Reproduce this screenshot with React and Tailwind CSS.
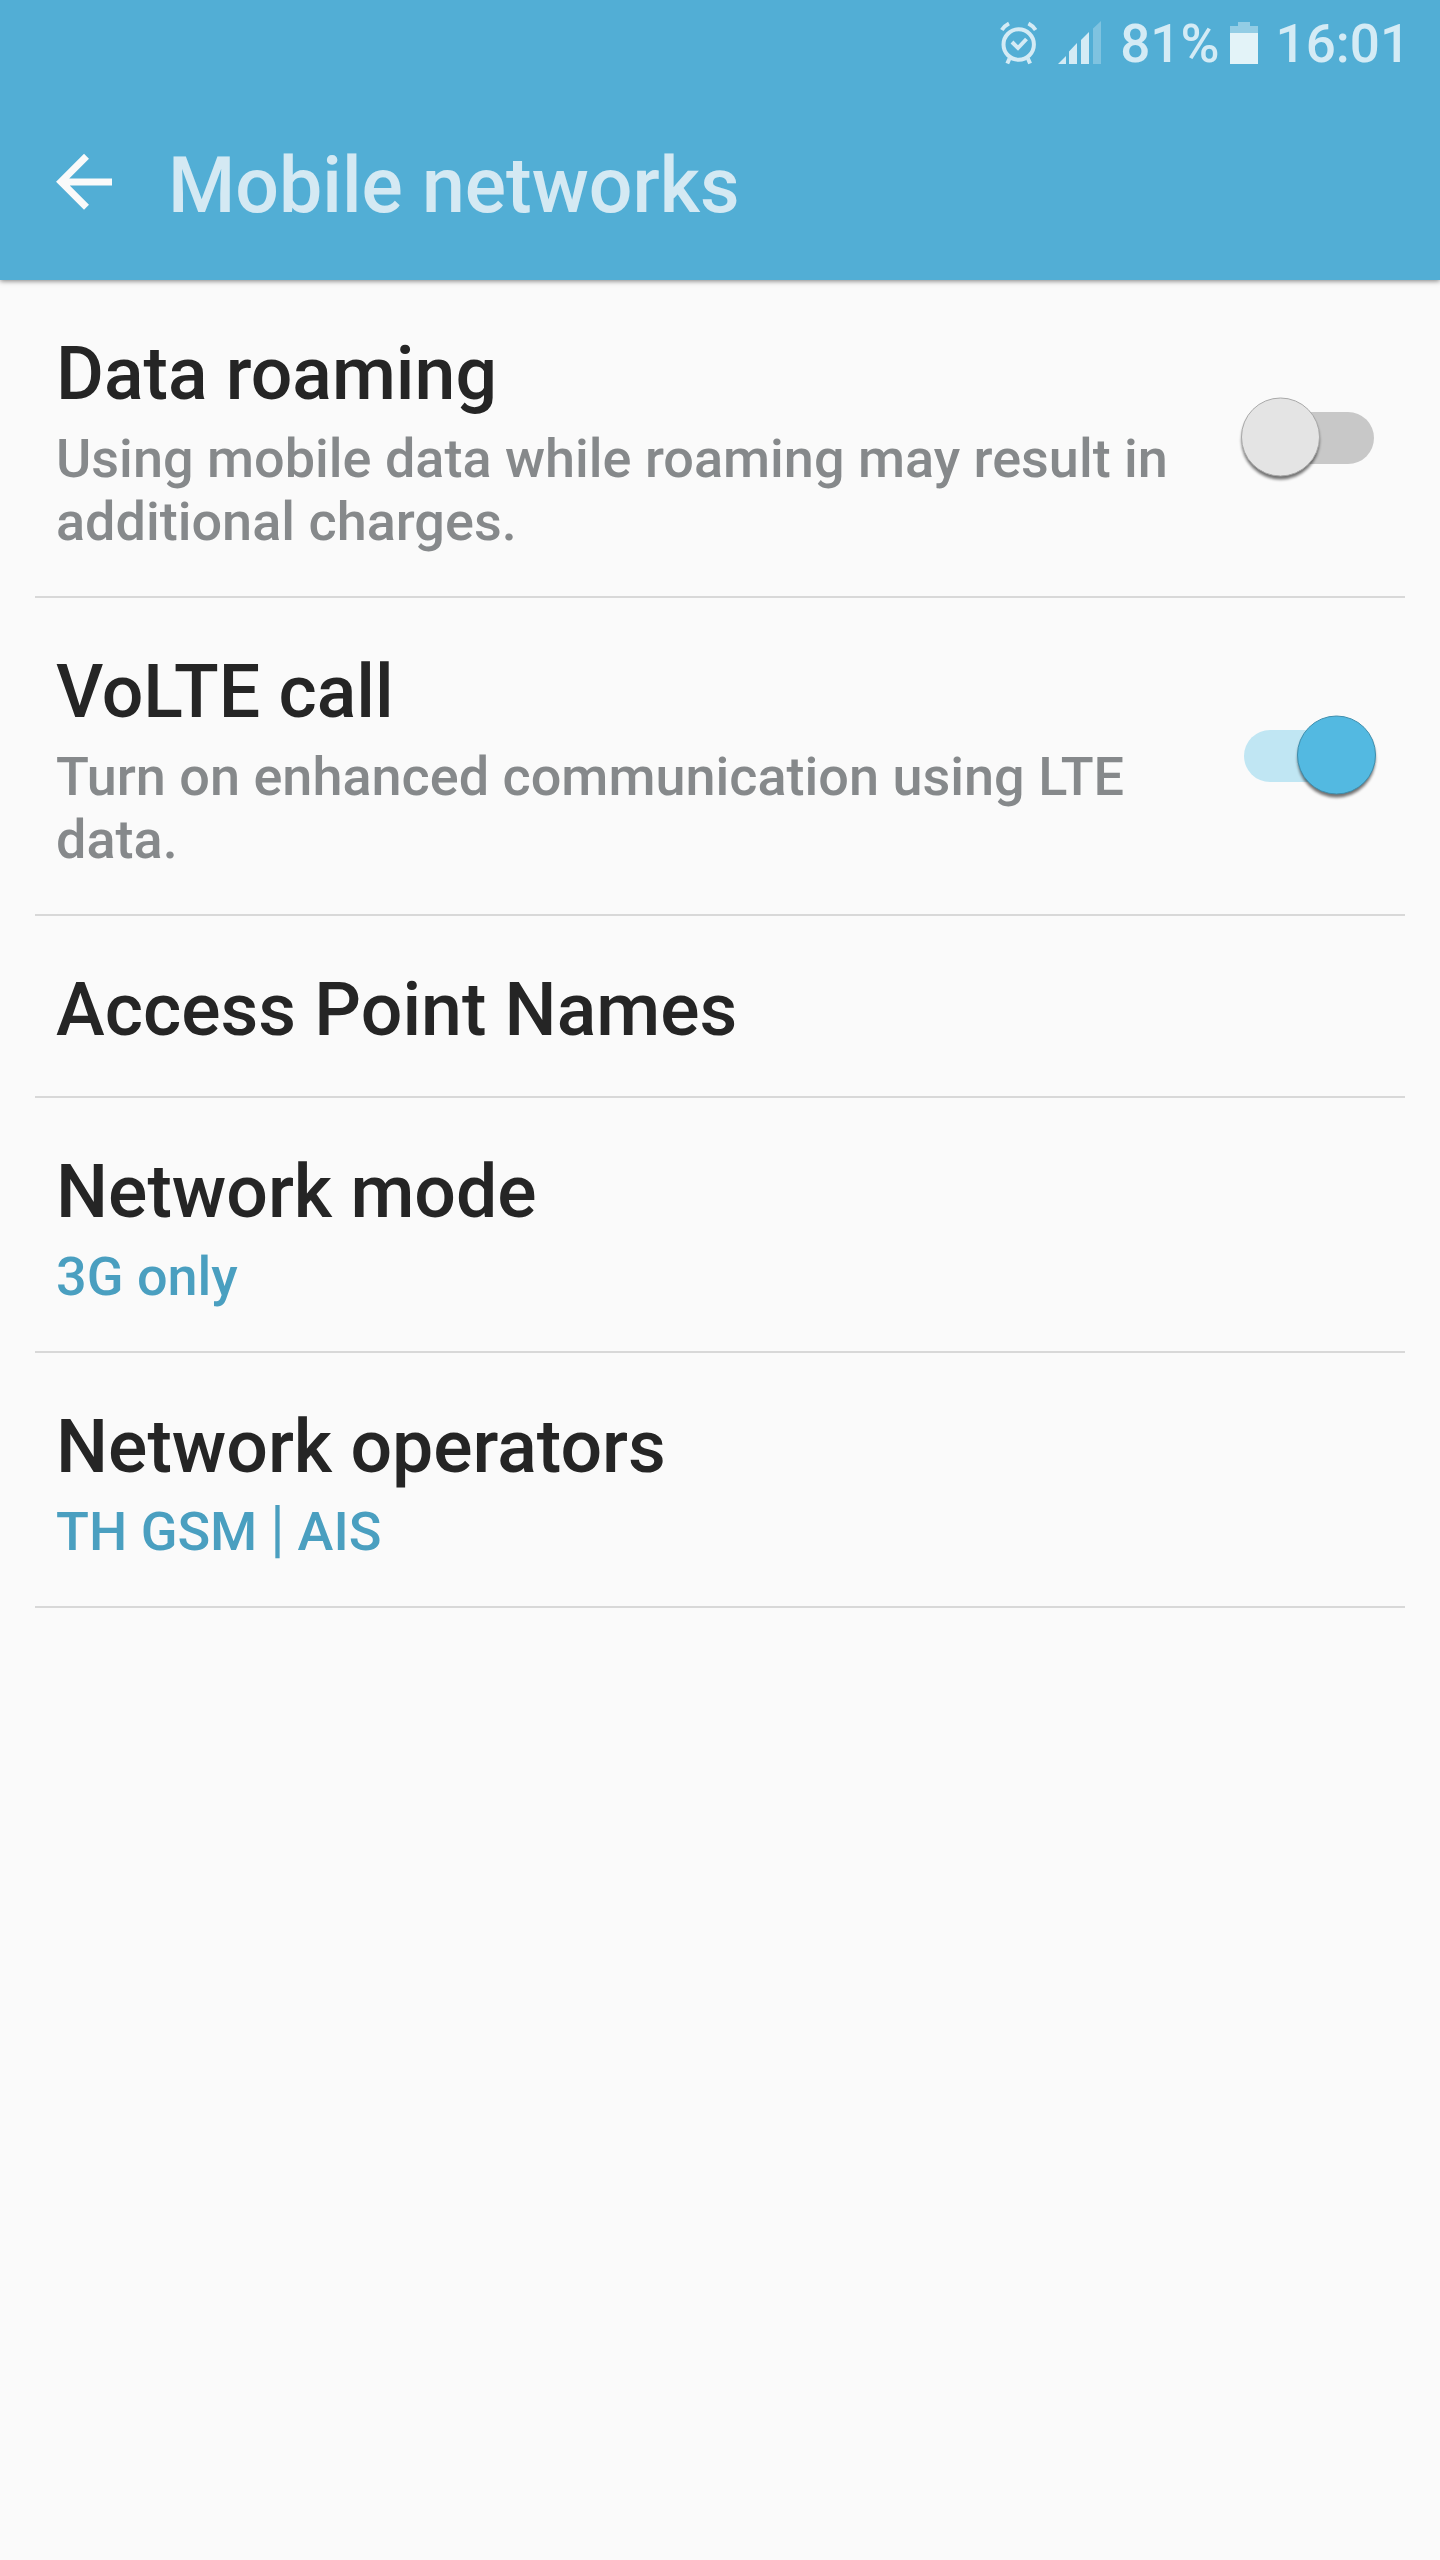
import React from "react";

const items = [
  {
    title: "Data roaming",
    summary: "Using mobile data while roaming may result in additional charges.",
    checked: false,
    height: "h-[318px]",
  },
  {
    title: "VoLTE call",
    summary: "Turn on enhanced communication using LTE data.",
    checked: true,
    height: "h-[318px]",
  },
  { title: "Access Point Names", height: "h-[182px]" },
  { title: "Network mode", value: "3G only", height: "h-[255px]" },
  {
    title: "Network operators",
    // tall divider between the network and the carrier
    value: (
      <>
        TH GSM <span className="inline-block -translate-y-[3px] scale-y-[1.17]">|</span> AIS
      </>
    ),
    height: "h-[255px]",
  },
];

const Switch = ({ checked }) => (
  <svg width="144" height="100" viewBox="0 0 144 100" className="mt-[55px] mr-[5px] shrink-0 overflow-visible">
    <defs>
      <filter id="knob-shadow" x="-20%" y="-20%" width="140%" height="140%">
        <feGaussianBlur stdDeviation="1.8" />
      </filter>
    </defs>
    <rect x="8" y="25" width="130" height="52" rx="26" fill={checked ? "#c0e6f3" : "#c8c8c8"} />
    <circle cx={checked ? 100.5 : 44.5} cy="53.5" r="39" fill="#000" opacity="0.55" filter="url(#knob-shadow)" />
    <circle
      cx={checked ? 100.5 : 44.5}
      cy="50"
      r="39"
      fill={checked ? "#53b9e1" : "#e4e4e4"}
      stroke={checked ? "#3f8fae" : "#a9a9a9"}
      strokeWidth="1"
    />
  </svg>
);

const AlarmIcon = () => (
  <svg width="38" height="44" viewBox="0 0 38 44" fill="none" stroke="#d4ebf5" strokeWidth="4" className="mb-1">
    <circle cx="18.7" cy="23.5" r="15.2" />
    <path d="M12 21l6 6 8.500-9" />
    <path d="M1.800 9C3.500 6.500 6 4 9 2.500M35.600 9C33.900 6.500 31.400 4 28.400 2.500" />
    <path d="M9.500 37.500l-2.200 5M27.900 37.500l2.200 5" />
  </svg>
);

const SignalIcon = () => (
  <svg width="43" height="44" viewBox="0 0 43 44" fill="#d4ebf5" className="mb-1">
    <path d="M0 43l8-8v8zM11 30.500l8-8.500v21h-8zM23 19l8-8v32h-8z" />
    <path d="M35 7.500L43 0v43h-8z" opacity="0.35" />
  </svg>
);

const BatteryIcon = () => (
  <svg width="28" height="42" viewBox="0 0 28 42" fill="#e3f3f8" className="mb-1">
    <path d="M0 4h8V0h12v4h8v7H0z" opacity="0.45" />
    <path d="M0 11h28v31H0z" />
  </svg>
);

const StatusBar = () => (
  <div className="flex h-[88px] items-center justify-end pt-[2px] pr-[30px] text-[53px] font-medium text-[#d4ebf5]">
    <AlarmIcon />
    <div className="ml-[20px]">
      <SignalIcon />
    </div>
    <span className="ml-[19px]">81%</span>
    <div className="ml-[10px]">
      <BatteryIcon />
    </div>
    <span className="ml-[18px]">16:01</span>
  </div>
);

export default function App() {
  return (
    <div className="min-h-[2560px] w-full bg-[#fafafa] font-['Roboto',sans-serif]">
      <header className="h-[280px] bg-[#52aed5] shadow-[0_1px_5px_rgba(0,0,0,0.5)]">
        <StatusBar />
        <div className="flex h-[192px] items-center pl-[55px]">
          <svg
            width="58"
            height="58"
            viewBox="0 0 58 58"
            fill="none"
            stroke="#fafafa"
            strokeWidth="7"
            className="mb-1"
          >
            <path d="M57 29H8M31.500 3.300L6 28.800l25.500 25.500" />
          </svg>
          <h1 className="mt-[5px] ml-[55px] text-[77px] font-medium text-[#d4e9f3]">Mobile networks</h1>
        </div>
      </header>
      <main className="px-[35px]">
        {items.map((item) => (
          <div
            key={item.title}
            className={`flex items-start border-b-2 border-[#d8d8d8] pt-[52px] pr-5 pl-[21px] ${item.height}`}
          >
            <div className="flex-1">
              <div className="text-[73.4px] leading-[85px] font-medium text-[#252525]">{item.title}</div>
              {item.summary && (
                <div className="mt-[10px] text-[54px] leading-[63px] font-medium text-[#86898b]">{item.summary}</div>
              )}
              {item.value && (
                <div className="mt-[10px] text-[54px] leading-[63px] font-medium text-[#4a9fc0]">{item.value}</div>
              )}
            </div>
            {item.checked !== undefined && <Switch checked={item.checked} />}
          </div>
        ))}
      </main>
    </div>
  );
}
